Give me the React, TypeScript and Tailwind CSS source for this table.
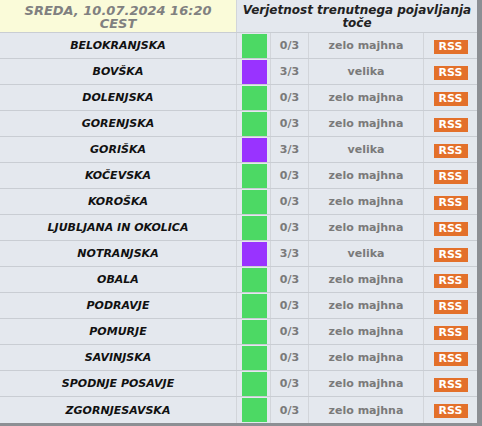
import React from "react";

type Row = { name: string; level: number };

const rows: Row[] = [
  { name: "BELOKRANJSKA", level: 0 },
  { name: "BOVŠKA", level: 3 },
  { name: "DOLENJSKA", level: 0 },
  { name: "GORENJSKA", level: 0 },
  { name: "GORIŠKA", level: 3 },
  { name: "KOČEVSKA", level: 0 },
  { name: "KOROŠKA", level: 0 },
  { name: "LJUBLJANA IN OKOLICA", level: 0 },
  { name: "NOTRANJSKA", level: 3 },
  { name: "OBALA", level: 0 },
  { name: "PODRAVJE", level: 0 },
  { name: "POMURJE", level: 0 },
  { name: "SAVINJSKA", level: 0 },
  { name: "SPODNJE POSAVJE", level: 0 },
  { name: "ZGORNJESAVSKA", level: 0 },
];

export default function App() {
  return (
    <div
      className="w-[482px] h-[426px] bg-[#8c8f94] overflow-hidden"
      style={{ fontFamily: '"DejaVu Sans", Verdana, sans-serif' }}
    >
      <div className="w-[477px] h-[423px] bg-[#e4e8ee] flex flex-col">
        <div className="flex h-[33px] border-b border-[#c9cdd3]">
          <div className="w-[237px] bg-[#fafbd9] border-r border-[#d2d5da] flex items-center justify-center pt-px text-center text-[13px] leading-[13px] font-bold italic text-[#808080]">
            <p>
              SREDA, 10.07.2024 16:20
              <br />
              CEST
            </p>
          </div>
          <div className="flex-1 bg-[#e4e8ee] flex items-center justify-center pt-px text-center text-[12px] leading-[13px] font-bold italic text-[#222]">
            <p>
              Verjetnost trenutnega pojavljanja
              <br />
              toče
            </p>
          </div>
        </div>
        {rows.map((r, i) => (
          <div
            key={r.name}
            className={
              "flex h-[26px] " + (i < rows.length - 1 ? "border-b border-[#c9cdd3]" : "")
            }
          >
            <div className="w-[237px] border-r border-[#d2d5da] flex items-center justify-center pt-[2px] text-[11px] font-bold italic text-[#111]">
              {r.name}
            </div>
            <div className="w-[34px] border-r border-[#d2d5da] flex items-center pl-[5px]">
              <div
                className={
                  "w-[25px] h-[24px] " + (r.level === 3 ? "bg-[#9933ff]" : "bg-[#4cd964]")
                }
              />
            </div>
            <div className="w-[38px] border-r border-[#d2d5da] flex items-center justify-center pt-[2px] text-[11px] font-bold text-[#7a7a7a]">
              {r.level}/3
            </div>
            <div className="w-[115px] border-r border-[#d2d5da] flex items-center justify-center pt-[2px] text-[11px] font-bold text-[#7a7a7a]">
              {r.level === 3 ? "velika" : "zelo majhna"}
            </div>
            <div className="flex-1 flex items-center justify-center pt-[2px]">
              <span className="bg-[#e3702a] text-white text-[11px] leading-[14px] font-bold w-[34px] text-center">
                RSS
              </span>
            </div>
          </div>
        ))}
      </div>
    </div>
  );
}
